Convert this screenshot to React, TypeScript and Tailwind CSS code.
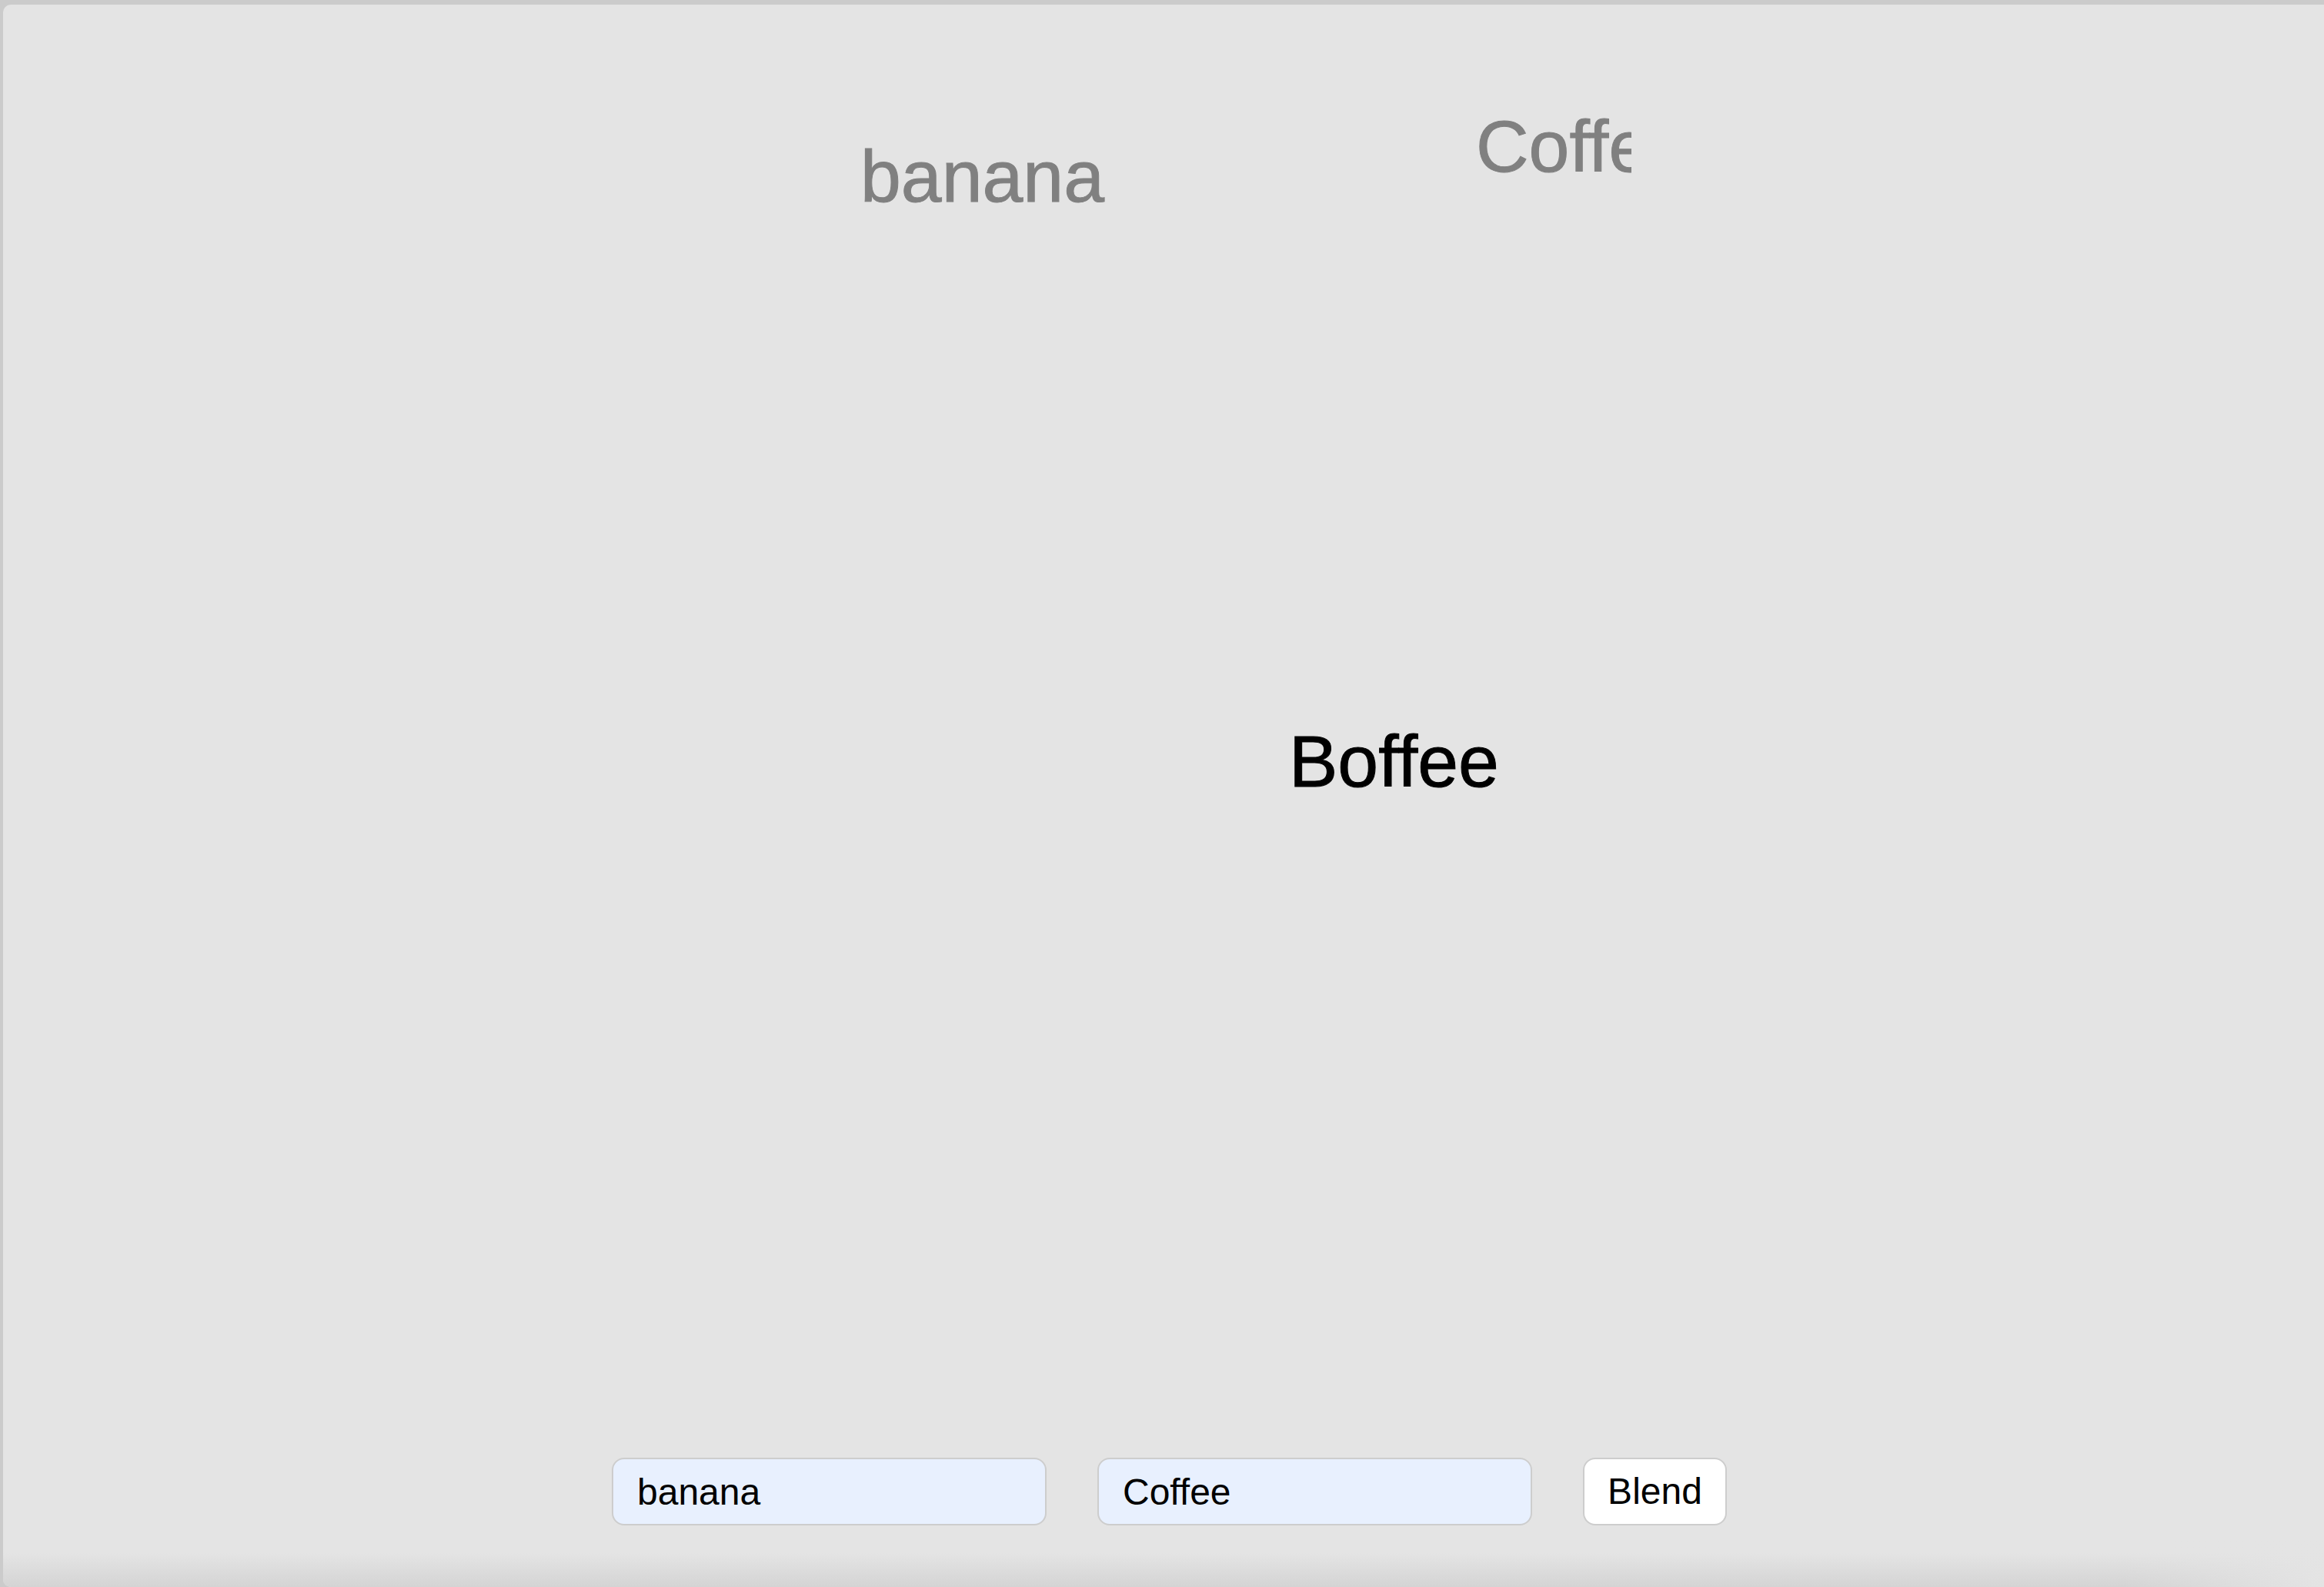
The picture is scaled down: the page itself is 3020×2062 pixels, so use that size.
import React from "react";

export default function App() {
  const font = { fontFamily: '"Liberation Sans", Arial, Helvetica, sans-serif' };
  return (
    <div
      className="w-[3020px] h-[2062px] bg-[#cbcbcb] pt-[6px] pl-[4px] flex overflow-hidden [font-variant-ligatures:none]"
      style={font}
    >
      <div className="relative flex-1 flex flex-col rounded-tl-[10px] rounded-bl-[10px] bg-[#e4e4e4] overflow-hidden">
        {/* morph canvas */}
        <div className="relative flex-1">
          <div className="absolute left-0 top-0 w-[2116px] h-[400px] overflow-hidden">
            <span className="absolute left-[1114px] top-[176px] text-[95px] leading-none text-[#808080] whitespace-nowrap [-webkit-text-stroke:1px_#808080] [font-variant-ligatures:none]">
              banana
            </span>
            <span className="absolute left-[1914px] top-[137px] text-[95px] leading-none text-[#808080] whitespace-nowrap [-webkit-text-stroke:1px_#808080] [font-variant-ligatures:none]">
              Coffee
            </span>
          </div>
          <span className="absolute left-[1671px] top-[936px] text-[95px] leading-none text-black whitespace-nowrap [-webkit-text-stroke:1px_#000] [font-variant-ligatures:none]">
            Boffee
          </span>
        </div>

        {/* controls */}
        <div className="relative z-10 flex justify-center items-center gap-[66px] pl-[15px] pb-[80px]">
          <input
            defaultValue="banana"
            className="w-[565px] h-[88px] rounded-[16px] border-2 border-[#cdcdcd] bg-[#e8f0fe] px-[31px] text-[48px] text-black outline-none [font-variant-ligatures:none]"
            style={font}
          />
          <input
            defaultValue="Coffee"
            className="w-[565px] h-[88px] rounded-[16px] border-2 border-[#cdcdcd] bg-[#e8f0fe] px-[31px] text-[48px] text-black outline-none [font-variant-ligatures:none]"
            style={font}
          />
          <button
            className="w-[187px] h-[88px] rounded-[16px] border-2 border-[#cdcdcd] bg-white text-[48px] text-black"
            style={font}
          >
            Blend
          </button>
        </div>

        {/* bottom shading */}
        <div className="absolute left-0 bottom-0 w-full h-[44px] bg-gradient-to-b from-[#e4e4e4]/0 to-[#d4d4d4] pointer-events-none" />
        <div className="absolute right-0 bottom-0 w-[260px] h-[60px] bg-gradient-to-r from-[#e4e4e4]/0 to-[#e4e4e4] pointer-events-none" />
      </div>
    </div>
  );
}
